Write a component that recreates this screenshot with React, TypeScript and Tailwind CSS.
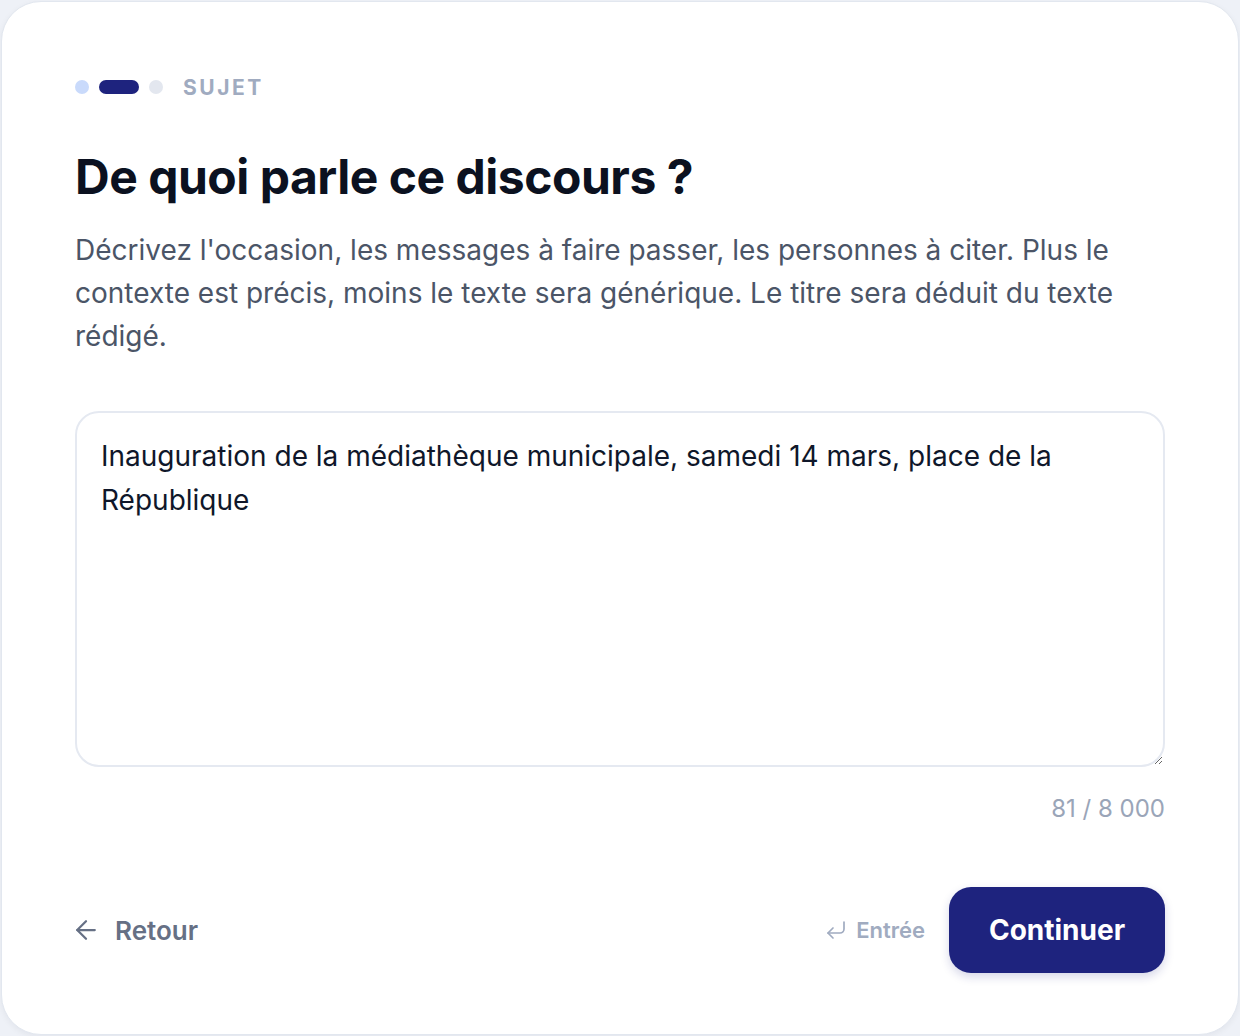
import React from "react";
import { ArrowLeft, CornerDownLeft } from "lucide-react";

export default function App() {
  return (
    <div className="w-[1240px] h-[1036px] bg-[#eef1f7] p-[1px] font-['Inter',sans-serif]">
      <div className="h-full w-full rounded-[40px] bg-white border border-[#e2e7ef] shadow-[0_2px_6px_rgba(15,23,42,0.05)] px-[73px] pt-[74px] flex flex-col">
        <div className="flex items-center h-[22px]">
          <span className="w-[14px] h-[14px] rounded-full bg-[#c9dafb]" />
          <span className="ml-[10px] w-[40px] h-[14px] rounded-full bg-[#1e237e]" />
          <span className="ml-[10px] w-[14px] h-[14px] rounded-full bg-[#e3e7ef]" />
          <span className="ml-[20px] text-[21px] font-bold tracking-[0.12em] text-[#a0abc0] leading-none">SUJET</span>
        </div>
        <h1 className="mt-[50px] text-[48px] font-bold text-[#0b1120] tracking-[-0.01em] leading-[1.2]">
          De quoi parle ce discours ?
        </h1>
        <p className="mt-[23px] text-[28px] leading-[43.3px] text-[#4b5567]">
          Décrivez l'occasion, les messages à faire passer, les personnes à citer. Plus le contexte est précis, moins le texte sera générique. Le titre sera déduit du texte rédigé.
        </p>
        <textarea
          className="mt-[53px] w-full h-[356px] shrink-0 rounded-[24px] border-2 border-[#e5e9f1] px-[24px] py-[21px] text-[28px] leading-[44px] text-[#0f172a] outline-none"
          defaultValue="Inauguration de la médiathèque municipale, samedi 14 mars, place de la République"
        />
        <div className="mt-[30px] text-right text-[24px] leading-none text-[#9aa5b8]">81 / 8 000</div>
        <div className="mt-[66px] flex items-center">
          <button className="flex items-center gap-[14px] text-[26px] font-semibold text-[#667085]">
            <ArrowLeft size={30} strokeWidth={1.8} className="-ml-[4px]" />
            Retour
          </button>
          <div className="ml-auto flex items-center gap-[8px] text-[22px] font-semibold text-[#a0abc0]">
            <CornerDownLeft size={24} strokeWidth={1.7} />
            Entrée
          </div>
          <button className="ml-[24px] w-[216px] h-[86px] rounded-[22px] bg-[#1e237e] text-white text-[28px] font-bold shadow-[0_4px_10px_rgba(30,35,126,0.18)]">
            Continuer
          </button>
        </div>
      </div>
    </div>
  );
}
